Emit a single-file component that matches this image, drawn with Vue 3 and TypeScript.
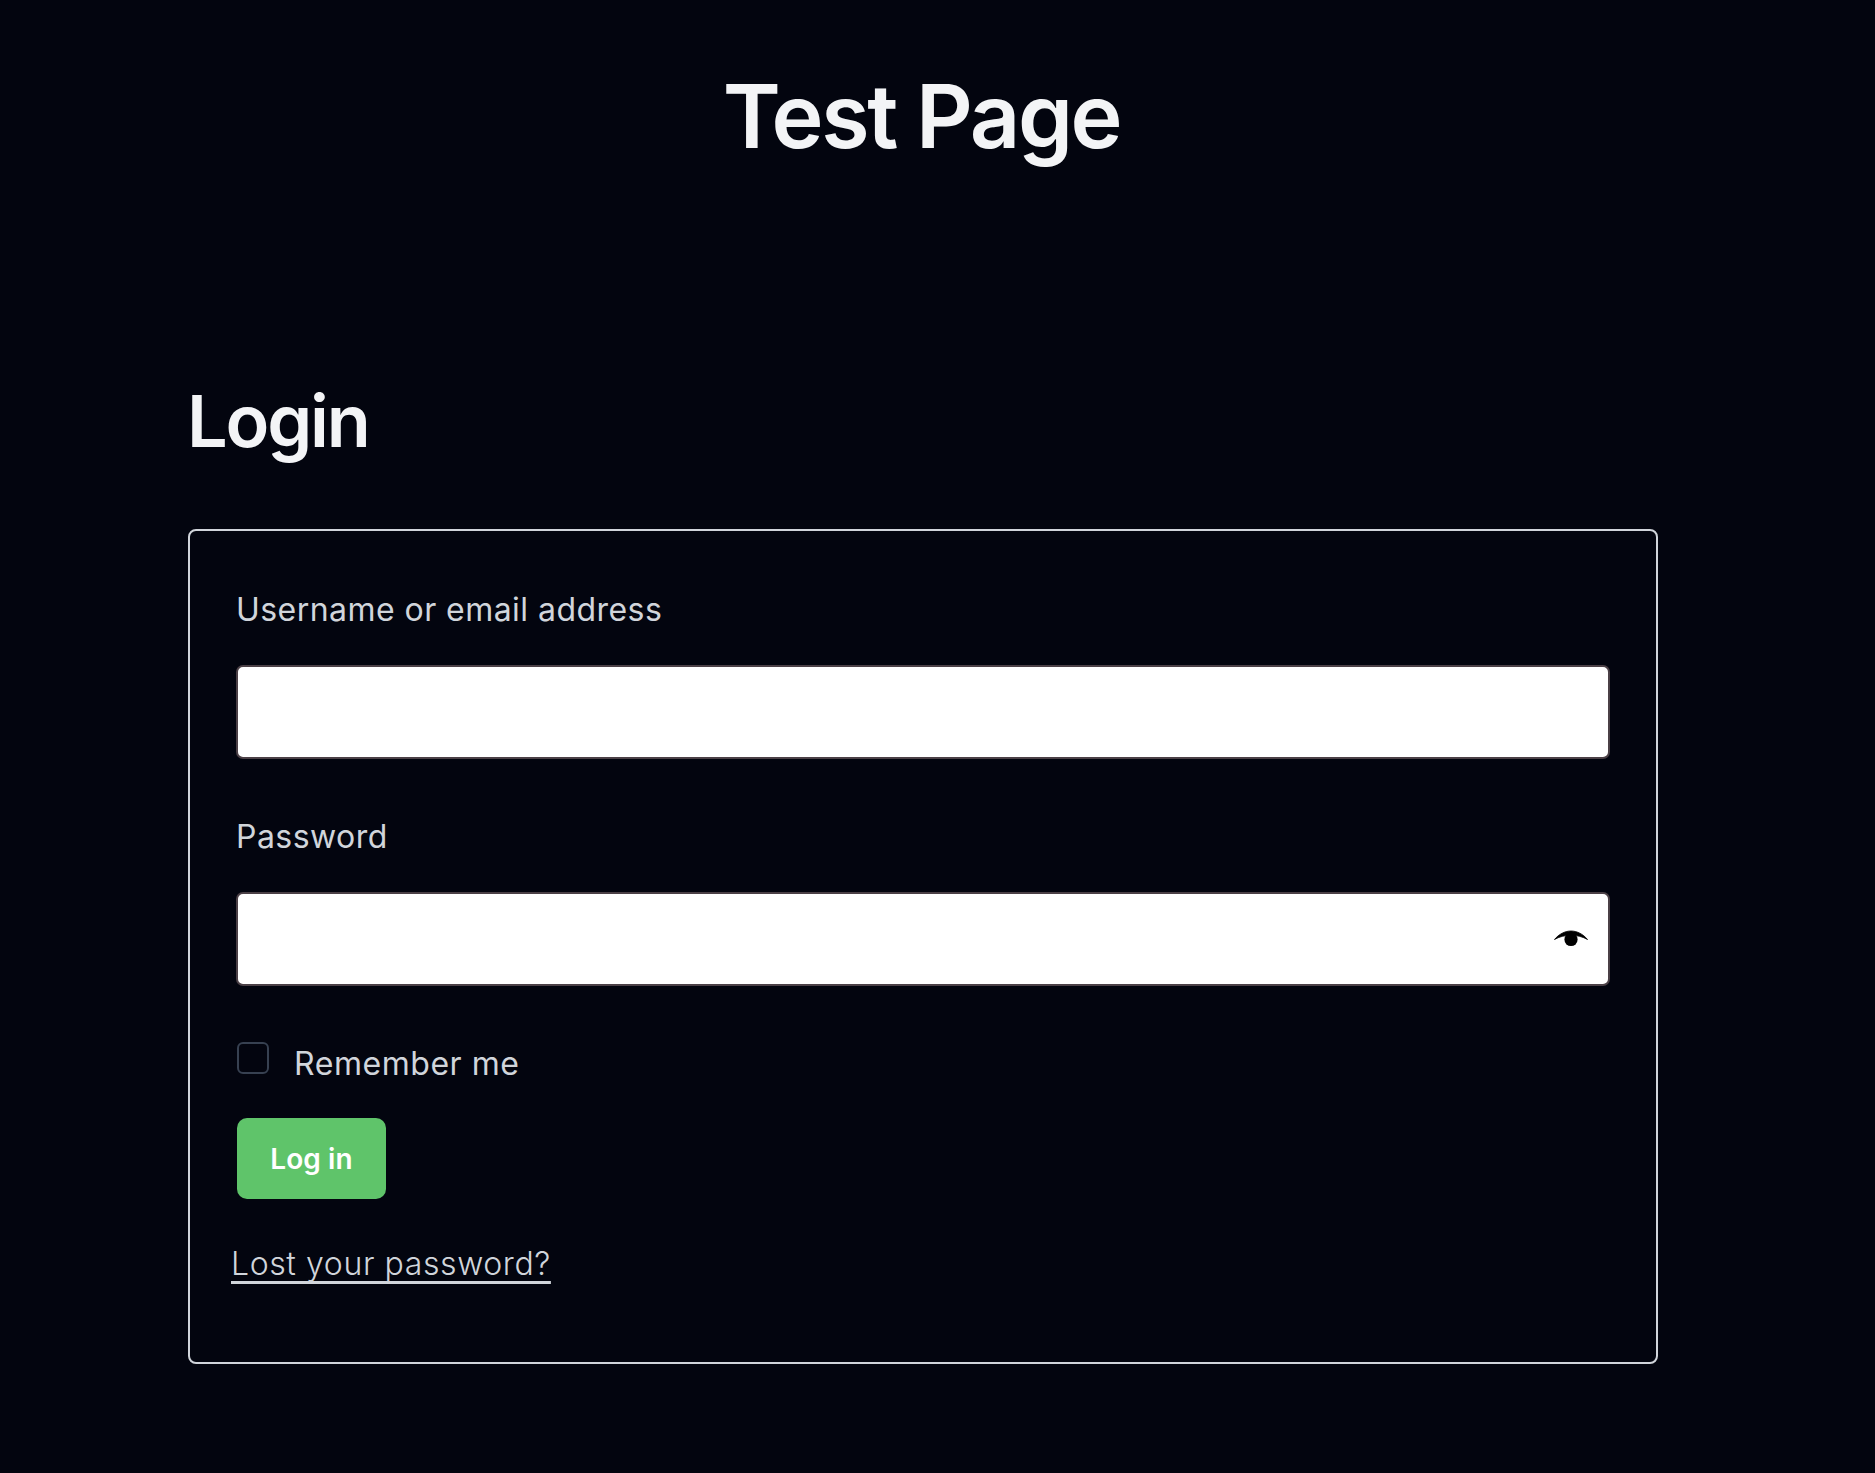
<script setup lang="ts">
const title: string = 'Test Page'
</script>

<template>
  <main class="page">
    <h1 class="site-title">{{ title }}</h1>
    <section class="content">
      <h2 class="heading">Login</h2>
      <form class="card" @submit.prevent>
        <label class="label" for="user">Username or email address</label>
        <input id="user" class="field" type="text" />
        <label class="label second" for="pass">Password</label>
        <div class="pass-wrap">
          <input id="pass" class="field" type="password" />
          <button class="eye" type="button" aria-label="Show password">
            <svg width="36" height="24" viewBox="0 0 36 24">
              <path d="M1.500 12.500C6 7 12 4 18 4s12 3 16.500 8.500C30 9.800 24 8.300 18 8.300S6 9.800 1.500 12.500z" fill="#000" stroke="#000" stroke-width="0.800" stroke-linejoin="round" />
              <circle cx="18" cy="12.500" r="6.600" fill="#000" />
            </svg>
          </button>
        </div>
        <div class="remember">
          <span class="check"></span>
          <span class="remember-text">Remember me</span>
        </div>
        <button class="submit" type="submit">Log in</button>
        <a class="lost" href="#">Lost your password?</a>
      </form>
    </section>
  </main>
</template>

<style>
html, body {
  margin: 0;
  background: #03050f;
}
</style>

<style scoped>
.page {
  box-sizing: border-box;
  width: 1875px;
  min-height: 1473px;
  padding: 63px 217px 0 188px;
  background: #03050f;
  font-family: Inter, "Liberation Sans", sans-serif;
  font-optical-sizing: none;
}
.site-title {
  margin: 0 3px 0 0;
  font-size: 88px;
  line-height: 106px;
  font-weight: 620;
  letter-spacing: -2.300px;
  color: #f3f4f6;
  text-align: center;
}
.content {
  margin-top: 213px;
}
.heading {
  margin: 0 0 0 -1px;
  font-size: 72px;
  line-height: 78px;
  font-weight: 620;
  letter-spacing: -2.200px;
  color: #f3f4f6;
}
.card {
  box-sizing: border-box;
  display: flex;
  flex-direction: column;
  align-items: flex-start;
  height: 835px;
  margin-top: 69px;
  padding: 59px 46px 0 46px;
  border: 2px solid #d1d5db;
  border-radius: 8px;
}
.label {
  font-size: 32px;
  line-height: 40px;
  font-weight: 420;
  letter-spacing: 0.450px;
  color: #d1d5db;
}
.second {
  margin-top: 58px;
}
.field {
  box-sizing: border-box;
  display: block;
  width: 100%;
  height: 94px;
  margin-top: 35px;
  padding: 0 20px;
  background: #fff;
  border: 2px solid #4b4046;
  border-radius: 7px;
  outline: none;
}
.pass-wrap {
  position: relative;
  width: 100%;
}
.eye {
  position: absolute;
  top: 70px;
  right: 21px;
  padding: 0;
  border: 0;
  background: none;
  line-height: 0;
}
.remember {
  display: flex;
  align-items: flex-start;
  margin: 56px 0 0 1px;
}
.check {
  box-sizing: border-box;
  display: block;
  width: 32px;
  height: 32px;
  border: 2px solid #374151;
  border-radius: 6px;
}
.remember-text {
  margin: 2px 0 0 25px;
  font-size: 32px;
  line-height: 40px;
  font-weight: 420;
  letter-spacing: 0.550px;
  color: #d1d5db;
}
.submit {
  width: 149px;
  height: 81px;
  margin: 34px 0 0 1px;
  padding: 0;
  border: 0;
  border-radius: 10px;
  background: #5fc46a;
  color: #fff;
  font-family: inherit;
  font-size: 28px;
  font-weight: 600;
  letter-spacing: 0.100px;
}
.lost {
  margin: 45px 0 0 -5px;
  font-size: 32px;
  line-height: 40px;
  font-weight: 300;
  letter-spacing: 0.600px;
  color: #d1d5db;
  text-decoration: underline;
  text-decoration-thickness: 3px;
  text-decoration-skip-ink: none;
  text-underline-offset: 6px;
}
</style>
